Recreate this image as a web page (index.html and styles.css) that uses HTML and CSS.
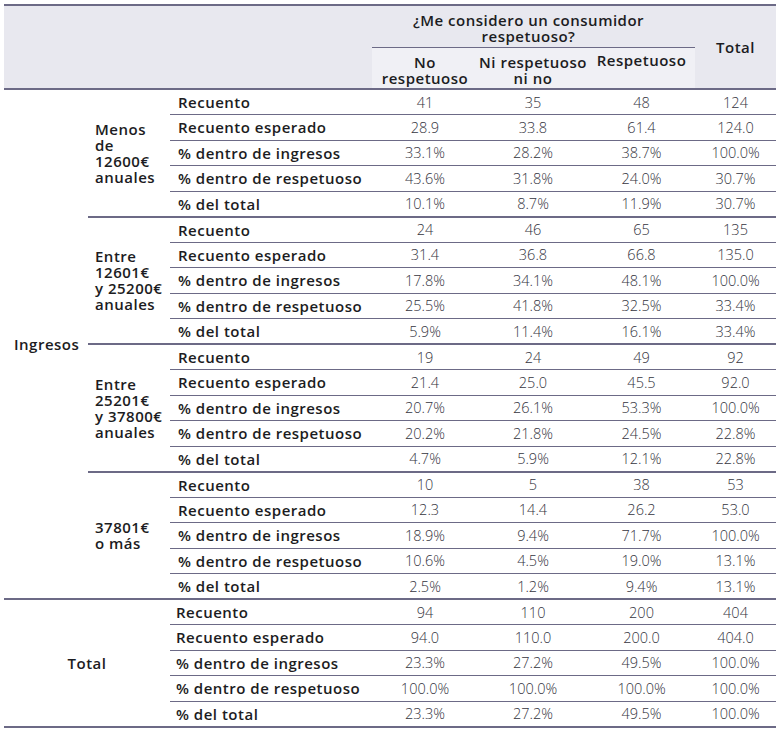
FILE: index.html
```html
<!DOCTYPE html>
<html lang="es">
<head>
<meta charset="utf-8">
<title>Tabla de contingencia</title>
<link rel="stylesheet" href="styles.css">
</head>
<body>
<table class="ct">
  <colgroup>
    <col class="c1"><col class="c2"><col class="c3"><col class="c4"><col class="c5"><col class="c6"><col class="c7">
  </colgroup>
  <thead>
    <tr class="h1">
      <th colspan="3" rowspan="2" class="corner"></th>
      <th colspan="3" class="qhead">¿Me considero un consumidor<br>respetuoso?</th>
      <th rowspan="2" class="thead-total">Total</th>
    </tr>
    <tr class="h2">
      <th class="sub">No<br>respetuoso</th>
      <th class="sub">Ni respetuoso<br>ni no</th>
      <th class="sub sub-top">Respetuoso</th>
    </tr>
  </thead>
  <tbody>
    <tr>
      <th rowspan="20" class="var">Ingresos</th>
      <th rowspan="5" class="grp">Menos<br>de<br>12600€<br>anuales</th>
      <th class="lbl">Recuento</th><td>41</td><td>35</td><td>48</td><td>124</td>
    </tr>
    <tr><th class="lbl">Recuento esperado</th><td>28.9</td><td>33.8</td><td>61.4</td><td>124.0</td></tr>
    <tr><th class="lbl">% dentro de ingresos</th><td>33.1%</td><td>28.2%</td><td>38.7%</td><td>100.0%</td></tr>
    <tr><th class="lbl">% dentro de respetuoso</th><td>43.6%</td><td>31.8%</td><td>24.0%</td><td>30.7%</td></tr>
    <tr class="end"><th class="lbl">% del total</th><td>10.1%</td><td>8.7%</td><td>11.9%</td><td>30.7%</td></tr>

    <tr>
      <th rowspan="5" class="grp">Entre<br>12601€<br>y 25200€<br>anuales</th>
      <th class="lbl">Recuento</th><td>24</td><td>46</td><td>65</td><td>135</td>
    </tr>
    <tr><th class="lbl">Recuento esperado</th><td>31.4</td><td>36.8</td><td>66.8</td><td>135.0</td></tr>
    <tr><th class="lbl">% dentro de ingresos</th><td>17.8%</td><td>34.1%</td><td>48.1%</td><td>100.0%</td></tr>
    <tr><th class="lbl">% dentro de respetuoso</th><td>25.5%</td><td>41.8%</td><td>32.5%</td><td>33.4%</td></tr>
    <tr class="end"><th class="lbl">% del total</th><td>5.9%</td><td>11.4%</td><td>16.1%</td><td>33.4%</td></tr>

    <tr>
      <th rowspan="5" class="grp">Entre<br>25201€<br>y 37800€<br>anuales</th>
      <th class="lbl">Recuento</th><td>19</td><td>24</td><td>49</td><td>92</td>
    </tr>
    <tr><th class="lbl">Recuento esperado</th><td>21.4</td><td>25.0</td><td>45.5</td><td>92.0</td></tr>
    <tr><th class="lbl">% dentro de ingresos</th><td>20.7%</td><td>26.1%</td><td>53.3%</td><td>100.0%</td></tr>
    <tr><th class="lbl">% dentro de respetuoso</th><td>20.2%</td><td>21.8%</td><td>24.5%</td><td>22.8%</td></tr>
    <tr class="end"><th class="lbl">% del total</th><td>4.7%</td><td>5.9%</td><td>12.1%</td><td>22.8%</td></tr>

    <tr>
      <th rowspan="5" class="grp">37801€<br>o más</th>
      <th class="lbl">Recuento</th><td>10</td><td>5</td><td>38</td><td>53</td>
    </tr>
    <tr><th class="lbl">Recuento esperado</th><td>12.3</td><td>14.4</td><td>26.2</td><td>53.0</td></tr>
    <tr><th class="lbl">% dentro de ingresos</th><td>18.9%</td><td>9.4%</td><td>71.7%</td><td>100.0%</td></tr>
    <tr><th class="lbl">% dentro de respetuoso</th><td>10.6%</td><td>4.5%</td><td>19.0%</td><td>13.1%</td></tr>
    <tr class="end"><th class="lbl">% del total</th><td>2.5%</td><td>1.2%</td><td>9.4%</td><td>13.1%</td></tr>
  </tbody>
  <tbody class="totals">
    <tr>
      <th colspan="2" rowspan="5" class="tot">Total</th>
      <th class="lbl">Recuento</th><td>94</td><td>110</td><td>200</td><td>404</td>
    </tr>
    <tr><th class="lbl">Recuento esperado</th><td>94.0</td><td>110.0</td><td>200.0</td><td>404.0</td></tr>
    <tr><th class="lbl">% dentro de ingresos</th><td>23.3%</td><td>27.2%</td><td>49.5%</td><td>100.0%</td></tr>
    <tr><th class="lbl">% dentro de respetuoso</th><td>100.0%</td><td>100.0%</td><td>100.0%</td><td>100.0%</td></tr>
    <tr class="end"><th class="lbl">% del total</th><td>23.3%</td><td>27.2%</td><td>49.5%</td><td>100.0%</td></tr>
  </tbody>
</table>
</body>
</html>
```

FILE: styles.css
```css
html, body {
  margin: 0;
  padding: 0;
  background: #ffffff;
}

body {
  padding: 4px 0 0 4px;
  font-family: "Open Sans", "Liberation Sans", sans-serif;
  color: #1c1c22;
}

.ct {
  border-collapse: collapse;
  table-layout: fixed;
  width: 772px;
  font-size: 14.5px;
}

.c1 { width: 84px; }
.c2 { width: 82px; }
.c3 { width: 202px; }
.c4 { width: 106px; }
.c5 { width: 110px; }
.c6 { width: 107px; }
.c7 { width: 81px; }

.ct th,
.ct td {
  padding: 0;
}

.ct th {
  font-size: 15px;
  letter-spacing: 0.5px;
}

/* header */
.ct thead tr.h1 th {
  border-top: 2px solid #6c6a86;
  background: #e8e8ef;
}
.ct thead tr.h1 { height: 42px; }
.ct thead tr.h2 { height: 42px; }

.qhead {
  font-weight: 600;
  line-height: 16px;
  text-align: center;
  vertical-align: bottom;
  padding: 0 10px 3px 0 !important;
  border-bottom: 1px solid #6c6a86;
}

.thead-total {
  font-weight: 600;
  text-align: center;
  vertical-align: middle;
}

.ct thead tr.h2 th,
.ct thead .corner,
.ct thead .thead-total {
  border-bottom: 2px solid #6c6a86;
}

.sub {
  background: #f0f0f5;
  font-weight: 600;
  line-height: 16px;
  text-align: center;
  vertical-align: bottom;
  padding-bottom: 2px !important;
}
.sub-top {
  vertical-align: top;
  padding-top: 4px !important;
}

/* body */
.ct tbody tr { height: 25.5px; }

.var {
  font-weight: 600;
  text-align: left;
  padding-left: 10px !important;
  vertical-align: middle;
  border-bottom: 2px solid #6c6a86;
}

.grp {
  font-weight: 600;
  text-align: left;
  vertical-align: middle;
  line-height: 16px;
  padding-left: 7px !important;
  border-bottom: 2px solid #6c6a86;
}

.lbl {
  font-weight: 600;
  text-align: left;
  padding-left: 8px !important;
  border-bottom: 1px solid #6c6a86;
  white-space: nowrap;
}

.ct td {
  text-align: center;
  font-weight: 300;
  color: #34343e;
  border-bottom: 1px solid #6c6a86;
}

.ct tr.end .lbl,
.ct tr.end td {
  border-bottom: 2px solid #6c6a86;
}

.tot {
  font-weight: 600;
  text-align: center;
  vertical-align: middle;
  border-top: 2px solid #6c6a86;
  border-bottom: 2px solid #6c6a86;
}

.totals .lbl {
  padding-left: 6px !important;
}
```
